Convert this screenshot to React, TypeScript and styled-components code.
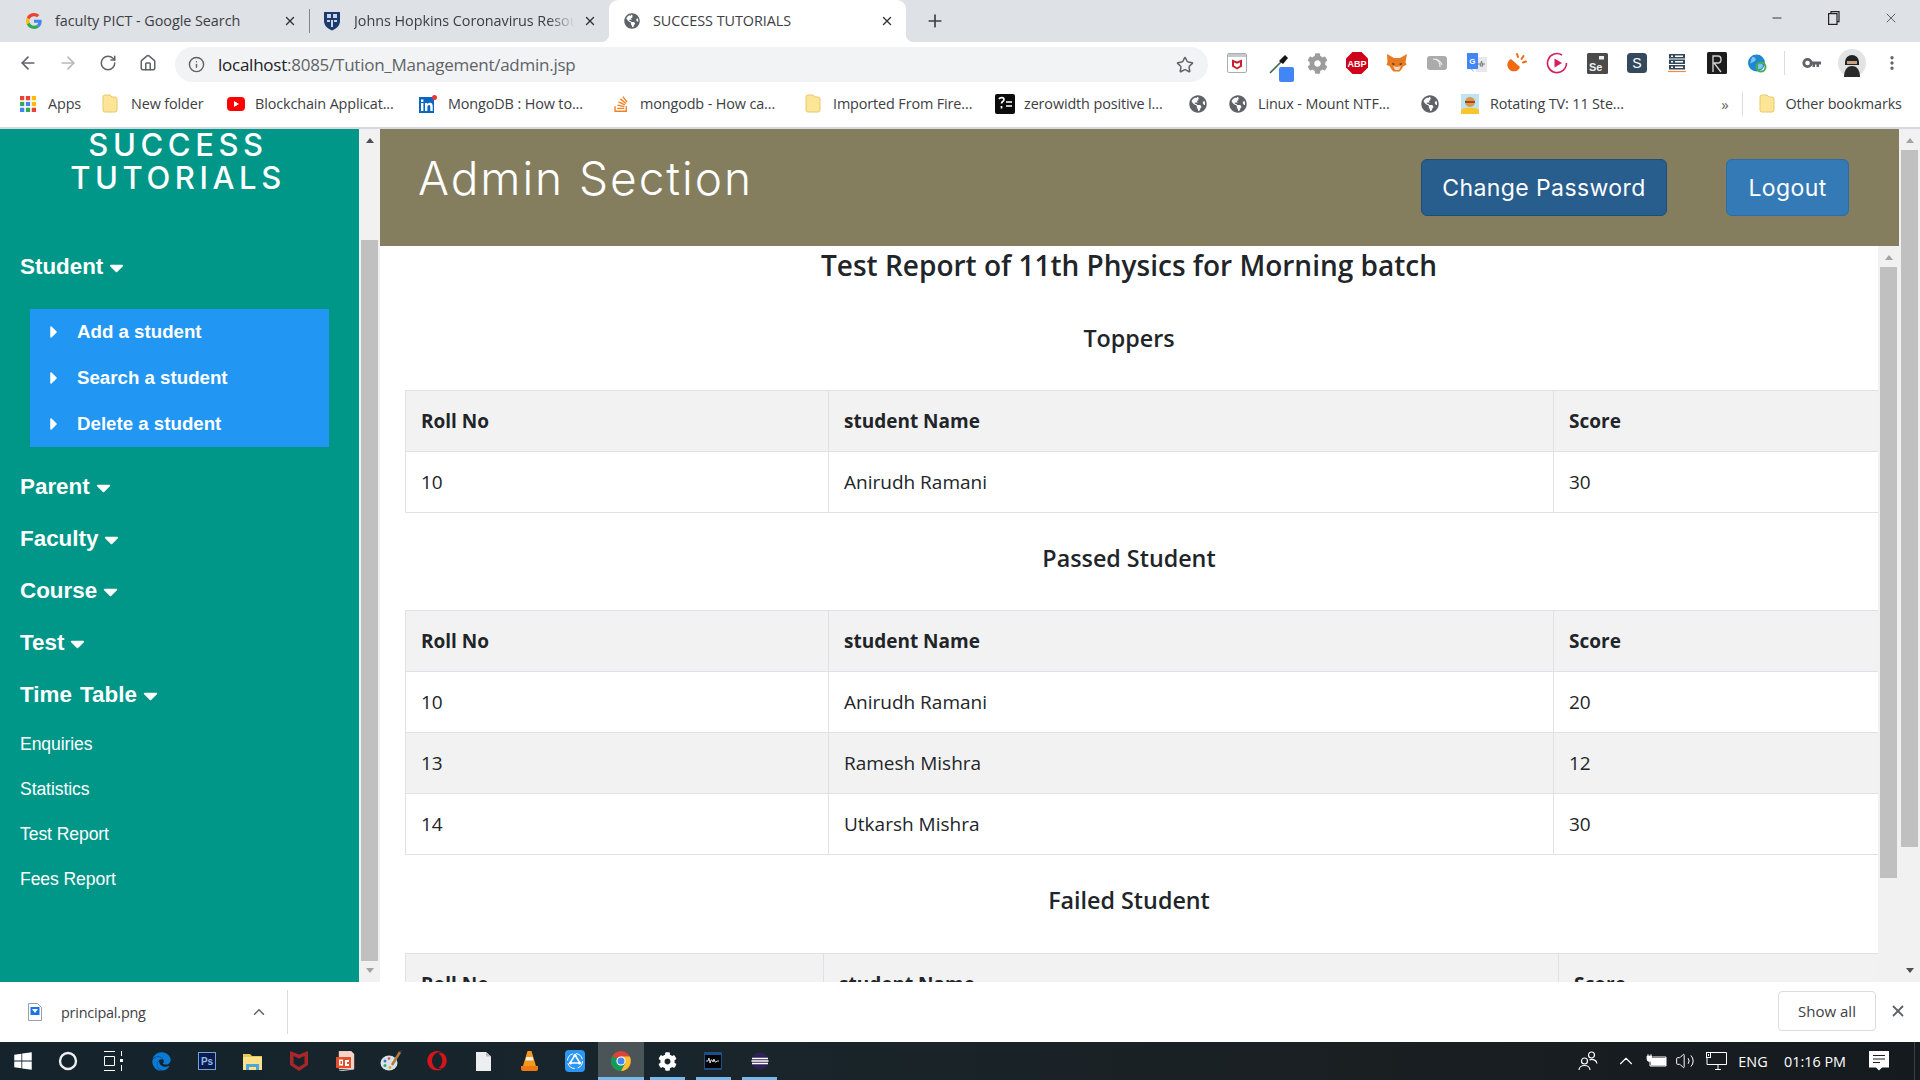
import React from "react";
import styled, { createGlobalStyle } from "styled-components";
import { ArrowLeft, ArrowRight, RotateCw, Home, Info, Star, X, Plus, Minus, ChevronUp, Volume2, MoreVertical } from "lucide-react";
import { FaGlobeAmericas, FaStackOverflow, FaCog, FaWindows, FaEdge, FaOpera, FaCaretDown, FaCaretRight } from "react-icons/fa";

const GlobalStyle = createGlobalStyle`
  html, body { margin: 0; padding: 0; width: 1920px; height: 1080px; overflow: hidden; background: #fff; }
  * { box-sizing: border-box; }
`;

const UI_FONT = `"Open Sans", "Noto Sans", sans-serif`;
const BRAND_FONT = `Inter, "Open Sans", sans-serif`;

const Screen = styled.div`
  width: 1920px; height: 1080px; display: flex; flex-direction: column; overflow: hidden;
  font-family: ${UI_FONT};
`;

/* ---------- tabs ---------- */
const TabStrip = styled.div`
  height: 42px; flex: none; background: #dee1e6; display: flex; align-items: stretch; padding-left: 16px;
`;
const Tab = styled.div<{ $w: number; $pad: number; $active?: boolean; $sep?: boolean }>`
  position: relative; width: ${p => p.$w}px; display: flex; align-items: center; padding-left: ${p => p.$pad}px; gap: 13px;
  background: ${p => (p.$active ? "#fff" : "transparent")};
  border-radius: ${p => (p.$active ? "9px 9px 0 0" : "0")};
  ${p => p.$sep ? `&::before { content: ""; position: absolute; left: 0; top: 9px; bottom: 9px; width: 1px; background: #80868b; }` : ""}
  ${p => p.$active ? `
    &::after { content: ""; position: absolute; right: -8px; bottom: 0; width: 8px; height: 8px;
      background: radial-gradient(circle at 100% 0, transparent 8px, #fff 8.5px); }
    &::before { content: ""; position: absolute; left: -8px; bottom: 0; width: 8px; height: 8px;
      background: radial-gradient(circle at 0 0, transparent 8px, #fff 8.5px); }
  ` : ""}
`;
const TabTitle = styled.span<{ $fade?: boolean }>`
  flex: 1; min-width: 0; margin-top: -2px; white-space: nowrap; overflow: hidden; font-size: 14.4px; letter-spacing: -0.05px; color: #3c4043;
  ${p => p.$fade ? `-webkit-mask-image: linear-gradient(90deg, #000 88%, transparent 100%);` : ""}
`;
const TabClose = styled.span`
  flex: none; width: 14px; height: 14px; margin-right: 12px; margin-left: -5px; display: flex; color: #303336;
`;
const NewTab = styled.span`
  margin-left: 19px; display: flex; align-items: center; color: #3c4043;
`;
const WindowControls = styled.div`
  margin-left: auto; display: flex; align-items: flex-start; padding: 10px 21px 0 0; gap: 41px; color: #202124;
`;
const WinBtn = styled.span`
  width: 16px; height: 16px; display: flex; align-items: center; justify-content: center;
`;

/* ---------- toolbar ---------- */
const Toolbar = styled.div`
  height: 42px; flex: none; background: #fff; display: flex; align-items: center; padding-left: 8px;
`;
const Slot = styled.span<{ $color?: string }>`
  flex: none; width: 40px; height: 36px; display: flex; align-items: center; justify-content: center;
  color: ${p => p.$color || "#5f6368"};
`;
const AddressBar = styled.div`
  flex: none; width: 1033px; height: 35px; margin: 5px 9px 2px 7px; border-radius: 18px; background: #f1f3f4;
  display: flex; align-items: center; padding: 0 14px 0 13px; color: #5f6368;
`;
const Url = styled.span`
  margin-left: 13px; font-size: 17px; letter-spacing: -0.25px; color: #202124; flex: 1; white-space: nowrap;
  & > em { font-style: normal; color: #5f6368; }
`;
const ToolbarSep = styled.span`
  flex: none; width: 1px; height: 24px; margin: 0 7px; background: #dadce0;
`;

/* ---------- bookmarks ---------- */
const Bookmarks = styled.div`
  height: 43px; flex: none; background: #fff; display: flex; align-items: center; padding: 0 0 4px 18px;
`;
const Bookmark = styled.div<{ $w: number; $gap?: number }>`
  flex: none; width: ${p => p.$w}px; display: flex; align-items: center; gap: ${p => p.$gap ?? 10}px;
  font-size: 14.4px; letter-spacing: -0.12px; color: #3c4043; white-space: nowrap;
`;
const IconBox = styled.span`
  flex: none; width: 20px; height: 20px; display: flex; align-items: center; justify-content: center;
`;
const BookmarkSep = styled.span`
  flex: none; width: 1px; height: 24px; background: #dadce0; margin: 0 14px 0 8.5px;
`;
const Overflow = styled.span`
  flex: none; width: 16px; font-size: 15px; color: #5f6368; text-align: center;
`;
const PageEdge = styled.div`
  height: 2px; flex: none; background: #d6d8dd;
`;

/* ---------- page ---------- */
const Main = styled.div`
  height: 853px; flex: none; display: flex; overflow: hidden; background: #fff;
`;
const Sidebar = styled.nav`
  flex: none; width: 359px; background: #009688; color: #fff; font-family: "Liberation Sans", Arial, sans-serif;
`;
const Logo = styled.div`
  font-family: ${BRAND_FONT}; font-weight: 500; font-size: 31px; line-height: 33px; letter-spacing: 4.6px; text-align: center;
  height: 66px; margin: -1px 0 47px; padding-right: 3px;
`;
const MenuHead = styled.div`
  height: 52px; padding-left: 20px; display: flex; align-items: center; gap: 2px; font-weight: 700; font-size: 22.4px; word-spacing: 2px;
`;
const SubMenu = styled.div`
  width: 299px; margin: 16px 0 14px 30px; height: 138px; background: #2196f3;
`;
const SubItem = styled.div`
  height: 46px; display: flex; align-items: center; padding-left: 14px; gap: 13px; font-weight: 700; font-size: 18.7px;
`;
const MenuLink = styled.div`
  height: 45px; padding: 2px 0 0 20px; display: flex; align-items: center; font-size: 17.6px; letter-spacing: -0.1px;
`;
const Track = styled.div`
  flex: none; width: 21px; height: 100%; background: #f1f1f1; display: flex; flex-direction: column; align-items: center;
`;
const Arrow = styled.span<{ $dir: "up" | "down"; $dark?: boolean }>`
  flex: none; height: 21px; display: flex; align-items: center; justify-content: center;
  padding: ${p => (p.$dir === "up" ? "2px 0 0" : "0 0 3px")};
  margin-top: ${p => (p.$dir === "down" ? "auto" : "0")};
  &::after { content: ""; width: 0; height: 0; border-left: 4.5px solid transparent; border-right: 4.5px solid transparent;
    ${p => p.$dir === "up" ? "border-bottom" : "border-top"}: 5px solid ${p => (p.$dark ? "#505050" : "#a3a3a3")}; }
`;
const Thumb = styled.span<{ $top: number; $h: number }>`
  flex: none; width: 17px; height: ${p => p.$h}px; margin-top: ${p => p.$top}px; background: #c0c0c0;
`;
const Workspace = styled.div`
  flex: none; width: 1519px; display: flex; flex-direction: column;
`;
const Header = styled.header`
  height: 117px; flex: none; background: #847e5f; display: flex; align-items: center; padding: 0 50px 0 38px; gap: 59px;
`;
const PageTitle = styled.h1`
  margin: 0 auto 20px 0; font-family: ${BRAND_FONT}; font-weight: 300; font-size: 46px; letter-spacing: 1.95px; color: #fff;
`;
const HeadButton = styled.button<{ $w: number; $dark?: boolean }>`
  width: ${p => p.$w}px; height: 57px; border-radius: 6px; font-family: ${BRAND_FONT}; font-size: 23px; letter-spacing: 0.4px; font-weight: 400; color: #fff; padding: 0;
  background: ${p => (p.$dark ? "#285e8e" : "#337ab7")};
  border: 1px solid ${p => (p.$dark ? "#204d74" : "#2e6da4")};
`;
const ContentRow = styled.div`
  flex: 1; min-height: 0; display: flex;
`;
const Report = styled.main`
  flex: none; width: 1498px; height: 736px; overflow: hidden; background: #fff; color: #212529;
`;
const ReportTitle = styled.h2`
  margin: 0; padding-bottom: 9px; font-size: 28px; line-height: 38px; font-weight: 600; text-align: center;
`;
const SectionTitle = styled.h3<{ $after?: number }>`
  margin: 29px 0 ${p => p.$after ?? 36}px; font-size: 23.3px; line-height: 32px; font-weight: 600; text-align: center;
`;
const Table = styled.table`
  margin-left: 25px; width: 1473px; border-collapse: collapse; table-layout: fixed; font-size: 19px;
  & tr:nth-child(odd) { background: #f2f2f2; }
`;
const HeadCell = styled.th`
  height: 61px; padding: 0 15px; border: 1px solid #dee2e6; text-align: left; font-weight: 700;
`;
const Cell = styled.td`
  height: 61px; padding: 0 15px; border: 1px solid #dee2e6;
`;

/* ---------- download bar ---------- */
const DownloadBar = styled.div`
  height: 60px; flex: none; background: #fff; display: flex; align-items: center; padding-left: 28px;
`;
const FileName = styled.span`
  margin-left: 19px; width: 186px; font-size: 14.4px; letter-spacing: -0.2px; color: #3c4043;
`;
const DlChevron = styled.span`
  width: 24px; display: flex; justify-content: center; color: #5f6368;
`;
const DlSep = styled.span`
  width: 1px; height: 44px; background: #dadce0; margin-left: 16px;
`;
const ShowAll = styled.button`
  margin: 0 0 2px auto; width: 98px; height: 40px; border: 1px solid #dadce0; border-radius: 4px; background: #fff;
  font-family: ${UI_FONT}; font-size: 15px; color: #3c4043; padding: 0 0 1px;
`;
const DlClose = styled.span`
  width: 44px; margin-bottom: 2px; display: flex; justify-content: center; color: #5f6368;
`;

/* ---------- taskbar ---------- */
const Taskbar = styled.div`
  height: 38px; flex: none; background: linear-gradient(90deg, #14232c 0%, #19252b 40%, #1a1f22 70%, #141a1e 100%);
  display: flex; align-items: stretch; color: #fff;
`;
const TaskSlot = styled.span<{ $w?: number; $after?: number; $active?: boolean; $open?: boolean }>`
  flex: none; width: ${p => p.$w ?? 46}px; margin-right: ${p => p.$after ?? 0}px; display: flex; align-items: center; justify-content: center; position: relative;
  background: ${p => (p.$active ? "#4b5456" : "transparent")};
  ${p => p.$open ? `&::after { content: ""; position: absolute; left: ${p.$active ? 0 : 6}px; right: ${p.$active ? 0 : 5}px; bottom: 0; height: 3px; background: #76b9ed; }` : ""}
`;
const Tray = styled.div`
  margin: 0 5px 0 auto; display: flex; align-items: center; border-right: 1px solid #3a4145;
`;
const TrayIcon = styled.span<{ $w: number }>`
  flex: none; width: ${p => p.$w}px; display: flex; align-items: center; justify-content: center; color: #fff;
`;
const TrayText = styled.span<{ $w: number }>`
  flex: none; width: ${p => p.$w}px; font-size: 14.4px; color: #fff; white-space: nowrap; text-align: center;
`;

/* ---------- drawings ---------- */
const Globe = ({ size = 16 }: { size?: number }) => <FaGlobeAmericas size={size} color="#5f6368" />;

const GoogleG = () => (
  <svg width="16" height="16" viewBox="0 0 48 48">
    <path fill="#EA4335" d="M24 9.5c3.54 0 6.71 1.22 9.21 3.6l6.85-6.85C35.9 2.38 30.47 0 24 0 14.62 0 6.51 5.38 2.56 13.22l7.98 6.19C12.43 13.72 17.74 9.5 24 9.5z" />
    <path fill="#4285F4" d="M46.98 24.55c0-1.57-.15-3.09-.38-4.55H24v9.02h12.94c-.58 2.96-2.26 5.48-4.78 7.18l7.73 6c4.51-4.18 7.09-10.36 7.09-17.65z" />
    <path fill="#FBBC05" d="M10.53 28.59c-.48-1.45-.76-2.99-.76-4.59s.27-3.14.76-4.59l-7.98-6.19C.92 16.46 0 20.12 0 24c0 3.88.92 7.54 2.56 10.78l7.97-6.19z" />
    <path fill="#34A853" d="M24 48c6.48 0 11.93-2.13 16.08-5.81l-7.73-6c-2.15 1.45-4.92 2.3-8.35 2.3-6.26 0-11.57-4.22-13.47-9.91l-7.98 6.19C6.51 42.62 14.62 48 24 48z" />
  </svg>
);
const JhuShield = () => (
  <svg width="18" height="20" viewBox="0 0 18 20">
    <path fill="#1d3a6e" d="M1 1h16v9c0 5-4 7.5-8 9.5-4-2-8-4.5-8-9.5z" />
    <path fill="#c9d4e6" d="M4 3h4v4H4zM10 3h4v4h-4zM8 9h2v7H8zM4 9h3v2H4zM11 9h3v2h-3z" />
  </svg>
);
const AppsGrid = () => {
  const c = ["#ea4335", "#ea4335", "#fbbc04", "#34a853", "#4285f4", "#fbbc04", "#4285f4", "#34a853", "#ea4335"];
  return (
    <svg width="16" height="16" viewBox="0 0 15 15">
      {c.map((f, i) => <rect key={i} x={(i % 3) * 5.5} y={Math.floor(i / 3) * 5.5} width="4" height="4" fill={f} />)}
    </svg>
  );
};
const Folder = () => (
  <svg width="16" height="19" viewBox="0 0 16 19">
    <path d="M1 3a2 2 0 0 1 2-2h5l2 2h3a2 2 0 0 1 2 2v11a2 2 0 0 1-2 2H3a2 2 0 0 1-2-2z" fill="#fce597" stroke="#e9c866" />
  </svg>
);
const YouTube = () => (
  <svg width="18" height="16" viewBox="0 0 18 16">
    <rect y="1" width="18" height="14" rx="4" fill="#f00" />
    <path d="M7 5l5 3-5 3z" fill="#fff" />
  </svg>
);
const LinkedInBadge = () => (
  <svg width="20" height="20" viewBox="0 0 20 20">
    <rect x="1" y="3" width="15" height="16" fill="#0a66c2" />
    <path fill="#fff" d="M3 9h2.4v8H3zM3 5.500h2.4V8H3zM7 9h2.3v1.200C10 9.300 11 8.800 12 8.800c2 0 2.700 1.300 2.700 3.400V17h-2.400v-4.300c0-1.100-.3-1.800-1.200-1.800-1 0-1.700.7-1.700 2V17H7z" />
    <circle cx="16.5" cy="3.500" r="2.500" fill="#e53935" />
  </svg>
);
const Terminal = () => (
  <svg width="20" height="20" viewBox="0 0 20 20">
    <rect width="20" height="20" rx="2" y="0" fill="#0b0b0b" />
    <path d="M4 5c1-2 5-2 5 .5 0 2-2.500 2-2.500 4M6.500 12v2.500M11 8h6M11 12h6" stroke="#fff" strokeWidth="1.700" fill="none" />
  </svg>
);
const RotatingTv = () => (
  <svg width="20" height="22" viewBox="0 0 20 22">
    <rect x="1" y="1" width="18" height="20" fill="#bfe3f0" />
    <circle cx="10" cy="9" r="5" fill="#d79a4c" />
    <path d="M5 9h10" stroke="#a5471f" strokeWidth="2" />
    <path d="M1 21v-4c3-3 15-3 18 0v4z" fill="#f7c52c" />
  </svg>
);
const McAfeeBox = () => (
  <svg width="20" height="20" viewBox="0 0 20 20">
    <rect x=".5" y=".5" width="19" height="19" rx="1.500" fill="#fff" stroke="#a9adb1" />
    <rect x="1" y="1" width="18" height="3" fill="#c5c9cc" />
    <path d="M5 6.500l5 2 5-2v7l-5 3-5-3zM7 9.500v3l3 2 3-2v-3l-3 1.200z" fill="#c8202f" fillRule="evenodd" />
  </svg>
);
const Dropper = () => (
  <svg width="38" height="40" viewBox="-10 -10 38 40">
    <path d="M2 20 L14 8" stroke="#3d6b50" strokeWidth="1.600" />
    <path d="M11 8 L17 2 L20 5 L15 11z" fill="#151515" />
    <rect x="11" y="14" width="15" height="15" rx="2" fill="#4285f4" />
  </svg>
);
const AbpSign = () => (
  <svg width="22" height="22" viewBox="0 0 22 22">
    <path d="M6.500 0h9L22 6.500v9L15.500 22h-9L0 15.500v-9z" fill="#d0021b" />
    <text x="11" y="14.500" textAnchor="middle" fontSize="9" fontWeight="700" fill="#fff" fontFamily="Liberation Sans">ABP</text>
  </svg>
);
const Fox = () => (
  <svg width="22" height="20" viewBox="0 0 22 20">
    <path d="M1 1l7 4h6l7-4-1.500 8 1 3-3 1-2.500 4-1.500 1.500H7.500L6 17l-2.500-4-3-1 1-3z" fill="#e87a23" />
    <path d="M7 13l4 1 4-1-2 4h-4z" fill="#f3d9c0" />
    <path d="M6 10l3 1-2 1zM16 10l-3 1 2 1z" fill="#33261a" />
  </svg>
);
const GraySwirl = () => (
  <svg width="20" height="14" viewBox="0 0 20 14">
    <rect width="20" height="14" rx="3" fill="#ababab" />
    <path d="M6 3c4 0 7 3 7 8M9 3c2 1 5 3 6 6" stroke="#eee" strokeWidth="1.200" fill="none" />
  </svg>
);
const Translate = () => (
  <svg width="22" height="22" viewBox="0 0 22 22">
    <rect x="10" y="5" width="11" height="15" fill="#e7e8ea" />
    <path d="M15.500 9l1.500 5-3 0zM12 12h7" stroke="#7b8085" strokeWidth="1" fill="none" />
    <path d="M1 1h11v16H6l2 3-3-3H1z" fill="#4285f4" />
    <text x="6.300" y="11.500" textAnchor="middle" fontSize="8" fontWeight="700" fill="#fff" fontFamily="Liberation Sans">G</text>
  </svg>
);
const OrangeBowl = () => (
  <svg width="22" height="22" viewBox="0 0 22 22">
    <path d="M5 7 L14 15 A6.500 6.500 0 1 1 5 7z" fill="#f26a0f" />
    <path d="M12 5l-1-3M15.500 7l2-3M17 10.500l3-1" stroke="#f26a0f" strokeWidth="2" strokeLinecap="round" />
  </svg>
);
const PlayRing = () => (
  <svg width="22" height="22" viewBox="0 0 22 22">
    <path d="M16 3A9.500 9.500 0 1 0 20.500 11" fill="none" stroke="#d81e5b" strokeWidth="1.600" />
    <path d="M8.500 6.500L16 11l-7.500 4.500z" fill="#d81e5b" />
  </svg>
);
const Selenium = () => (
  <svg width="21" height="21" viewBox="0 0 21 21">
    <rect width="21" height="21" rx="1.500" fill="#4a4a4a" />
    <rect x="12" y="3" width="5" height="3.500" fill="#eee" />
    <text x="2" y="18" fontSize="11" fontWeight="700" fill="#eee" fontFamily="Liberation Sans">Se</text>
  </svg>
);
const SBadge = () => (
  <svg width="20" height="20" viewBox="0 0 20 20">
    <rect width="20" height="20" rx="3.500" fill="#34495e" />
    <text x="10" y="15" textAnchor="middle" fontSize="14" fontWeight="400" fill="#fff" fontFamily="Liberation Sans">S</text>
  </svg>
);
const ServerStack = () => (
  <svg width="20" height="20" viewBox="0 0 20 20">
    {[1, 6.5, 12].map(y => <g key={y}><rect x="2" y={y} width="16" height="4.500" fill="#33475b" /><rect x="4" y={y + 1.5} width="2" height="1.500" fill="#fff" /><rect x="8" y={y + 1.5} width="8" height="1.500" fill="#fff" /></g>)}
    <path d="M1 18.500h18" stroke="#f28c38" strokeWidth="1.200" />
  </svg>
);
const RBadge = () => (
  <svg width="20" height="22" viewBox="0 0 20 22">
    <rect width="20" height="22" rx="1.500" fill="#1c1c1c" />
    <path d="M6 20V4h5c4 0 4 7 0 7H7l7 9" stroke="#cfcfcf" strokeWidth="1.400" fill="none" />
  </svg>
);
const BlueWorld = () => (
  <svg width="20" height="20" viewBox="0 0 20 20">
    <circle cx="9.500" cy="10" r="8.500" fill="#1e88d2" />
    <path d="M5 4c3 0 5 2 3 4s-4 1-5 3M11 11c3-1 5 0 5 2s-3 4-5 3z" fill="#7cc4ee" />
    <circle cx="14" cy="14" r="4.500" fill="none" stroke="#4caf50" strokeWidth="2" />
  </svg>
);
const KeyIcon = () => (
  <svg width="20" height="14" viewBox="0 0 20 14">
    <circle cx="5.500" cy="7" r="3.700" fill="none" stroke="#5f6368" strokeWidth="2.800" />
    <path d="M9 5.500h10v3h-2v2.500h-2.500V8.500H13V11h-2.500V8.500H9z" fill="#5f6368" />
  </svg>
);
const Avatar = () => (
  <svg width="28" height="28" viewBox="0 0 28 28">
    <circle cx="14" cy="14" r="14" fill="#e1e3e5" />
    <path d="M7 13a7 7 0 0 1 14 0v3H7z" fill="#222" />
    <rect x="9" y="12" width="10" height="3" fill="#c9a283" />
    <path d="M6 28c0-8 4-11 8-11s8 3 8 11z" fill="#2b2b2b" />
  </svg>
);
const DownloadFile = () => (
  <svg width="14" height="18" viewBox="0 0 14 18">
    <path d="M.500.500h9l4 4v13H.500z" fill="#fff" stroke="#9aa0a6" />
    <rect x="2.500" y="4" width="9" height="8" fill="#1a73e8" />
    <path d="M4 6h6L7 10z" fill="#fff" />
  </svg>
);
const TaskView = () => (
  <svg width="20" height="20" viewBox="0 0 20 20" fill="none" stroke="#fff" strokeWidth="1">
    <path d="M1 .5h11M1 19.500h11M1.500 5.500h10v9h-10zM18.500 0v5M18.500 14v6" />
    <rect x="17" y="8" width="3" height="3" fill="#fff" stroke="none" />
  </svg>
);
const ExplorerFolder = () => (
  <svg width="20" height="18" viewBox="0 0 20 18">
    <path d="M0 2h7l2 2h10v3H0z" fill="#e8c75a" />
    <path d="M0 5h19v13H0z" fill="#fbe28a" />
    <path d="M3 18v-6h13v6h-3v-3H6v3z" fill="#4ea6dc" />
  </svg>
);
const McAfeeShield = () => (
  <svg width="18" height="20" viewBox="0 0 18 20">
    <path fillRule="evenodd" fill="#a9262b" d="M0 0l9 3.500L18 0v14l-9 6-9-6zM3.500 5v7.500L9 16l5.500-3.500V5L9 7.500z" />
  </svg>
);
const PptDoc = () => (
  <svg width="20" height="20" viewBox="0 0 20 20">
    <path d="M4 0h12l3 3v15H4z" fill="#f6d5c8" stroke="#e8b09c" strokeWidth=".5" />
    <path d="M1 6h15v11H1z" fill="#e2512c" />
    <path d="M4 8.500h4v6H4zM5.500 10v3h1.500v-3zM10 9h4v2h-2v2h2v2h-4z" fill="#fff" fillRule="evenodd" />
    <path d="M4 20l15-2" stroke="#ccc" strokeWidth="1" />
  </svg>
);
const Palette = () => (
  <svg width="22" height="22" viewBox="0 0 22 22">
    <ellipse cx="9" cy="13" rx="8.500" ry="7.500" fill="#d7e2ea" />
    <circle cx="5" cy="11" r="1.500" fill="#3c78c8" /><circle cx="9" cy="8.500" r="1.300" fill="#e04b3a" />
    <circle cx="5" cy="15.500" r="1.500" fill="#3aa655" /><circle cx="10" cy="17.500" r="1.400" fill="#e0a72e" />
    <path d="M12 15L20 2" stroke="#b47a3c" strokeWidth="2.500" />
    <path d="M19 1l3-1-1 3z" fill="#3a3a3a" />
  </svg>
);
const BlankFile = () => (
  <svg width="15" height="19" viewBox="0 0 15 19">
    <path d="M0 0h10l5 4.500V19H0z" fill="#eceeef" />
    <path d="M10 0l5 4.500h-5z" fill="#b6babd" />
  </svg>
);
const VlcCone = () => (
  <svg width="17" height="20" viewBox="0 0 17 20">
    <path d="M6.500 0h4L15 15H2z" fill="#f39a1e" />
    <path d="M5.400 6h6.200l1 3.500H4.400z" fill="#f2efe9" />
    <path d="M0 15h17v3a2 2 0 0 1-2 2H2a2 2 0 0 1-2-2z" fill="#ec7a12" />
  </svg>
);
const ShareIt = () => (
  <svg width="20" height="22" viewBox="0 0 20 22">
    <rect width="20" height="22" rx="4" fill="#2b96f3" />
    <circle cx="10" cy="11" r="7.500" fill="none" stroke="#fff" strokeWidth="1" strokeDasharray="9 3" />
    <path d="M10 5l5 8H5z" fill="none" stroke="#fff" strokeWidth="1.500" />
    <circle cx="10" cy="5.500" r="1.500" fill="#fff" /><circle cx="5.500" cy="13" r="1.500" fill="#fff" /><circle cx="14.500" cy="13" r="1.500" fill="#fff" />
  </svg>
);
const ChromeLogo = () => (
  <svg width="20" height="20" viewBox="0 0 20 20">
    <circle cx="10" cy="10" r="10" fill="#dc4437" />
    <path d="M10 10L1.340 5A10 10 0 0 0 10 20l5-8.660z" fill="#0f9d58" />
    <path d="M10 5.500h8.700A10 10 0 0 1 10 20l4.300-7.700z" fill="#fbc02d" />
    <circle cx="10" cy="10" r="4.600" fill="#fff" />
    <circle cx="10" cy="10" r="3.500" fill="#4285f4" />
  </svg>
);
const MySqlBox = () => (
  <svg width="18" height="18" viewBox="0 0 18 18">
    <rect width="18" height="18" rx="1" fill="#1f4f8a" />
    <rect x="1" y="3" width="16" height="13" fill="#050505" />
    <path d="M2 9h2l1-3 1 5 1-3h1l1 2 1-3 1 3h1l1-1h2" stroke="#e8e8e8" strokeWidth=".9" fill="none" />
  </svg>
);
const Eclipse = () => (
  <svg width="20" height="20" viewBox="0 0 20 20">
    <path d="M8 0a10 10 0 0 0 0 20a10 10 0 0 1 0-20z" fill="#d98a2b" />
    <circle cx="11" cy="10" r="8.500" fill="#2c2255" />
    <path d="M3 7.500h16M2.500 10h17M3 12.500h16" stroke="#fff" strokeWidth="1.300" />
  </svg>
);
const People = () => (
  <svg width="20" height="20" viewBox="0 0 20 20" fill="none" stroke="#fff" strokeWidth="1.200">
    <circle cx="6.500" cy="10" r="3" /><path d="M1 19c0-6 11-6 11 0" />
    <circle cx="13.500" cy="4" r="3" /><path d="M11.500 9c3-1.500 7 0 7.500 3.500" />
  </svg>
);
const Battery = () => (
  <svg width="22" height="14" viewBox="0 0 22 14">
    <path d="M3 0v2M6 0v2M2 2h5v3a2 2 0 0 1-5 0z" fill="#fff" stroke="#fff" strokeWidth=".8" />
    <path d="M5 7v5h16V3H8" fill="none" stroke="#fff" />
    <rect x="6" y="4" width="15" height="7.500" fill="#fff" />
  </svg>
);
const Monitor = () => (
  <svg width="21" height="18" viewBox="0 0 21 18" fill="none" stroke="#fff" strokeWidth="1">
    <path d="M5 .5h15.500v12H1V5M9 17.500h6M12 12.500v5" />
    <rect x=".5" y=".5" width="4" height="5" />
    <rect x="2" y="2" width="1" height="2" fill="#fff" stroke="none" />
  </svg>
);
const Notify = () => (
  <svg width="20" height="20" viewBox="0 0 20 20">
    <path d="M0 0h20v16.500h-7l-3 3-3-3H0z" fill="#fff" />
    <path d="M4 4.500h12M4 8h12M4 11.500h7" stroke="#1a2025" strokeWidth="1" />
  </svg>
);

const Caret = () => <FaCaretDown size={23} />;
const SubCaret = () => <FaCaretRight size={20} />;

const topMenus = ["Parent", "Faculty", "Course", "Test", "Time Table"];
const links = ["Enquiries", "Statistics", "Test Report", "Fees Report"];
const subs = ["Add a student", "Search a student", "Delete a student"];

type Row = [string, string, string];
const toppers: Row[] = [["10", "Anirudh Ramani", "30"]];
const passed: Row[] = [["10", "Anirudh Ramani", "20"], ["13", "Ramesh Mishra", "12"], ["14", "Utkarsh Mishra", "30"]];

const ScoreTable = ({ cols, rows }: { cols: number[]; rows: Row[] }) => (
  <Table>
    <colgroup>{cols.map((c, i) => <col key={i} width={c} />)}</colgroup>
    <tbody>
      <tr><HeadCell>Roll No</HeadCell><HeadCell>student Name</HeadCell><HeadCell>Score</HeadCell></tr>
      {rows.map(r => <tr key={r[0]}><Cell>{r[0]}</Cell><Cell>{r[1]}</Cell><Cell>{r[2]}</Cell></tr>)}
    </tbody>
  </Table>
);

export default function App() {
  return (
    <Screen>
      <GlobalStyle />
      <TabStrip>
        <Tab $w={293} $pad={10}><GoogleG /><TabTitle>faculty PICT - Google Search</TabTitle><TabClose><X size={14} strokeWidth={2.4} /></TabClose></Tab>
        <Tab $w={300} $pad={14} $sep><JhuShield /><TabTitle $fade>Johns Hopkins Coronavirus Resource Center</TabTitle><TabClose><X size={14} strokeWidth={2.4} /></TabClose></Tab>
        <Tab $w={297} $pad={15} $active><Globe /><TabTitle>SUCCESS TUTORIALS</TabTitle><TabClose><X size={14} strokeWidth={2.4} /></TabClose></Tab>
        <NewTab><Plus size={20} strokeWidth={2} /></NewTab>
        <WindowControls>
          <WinBtn><Minus size={14} strokeWidth={1.5} /></WinBtn>
          <WinBtn>
            <svg width="12" height="14" viewBox="0 0 12 14" fill="none" stroke="#202124" strokeWidth="1.200"><path d="M3 2.500V.6h8v10H9" /><rect x=".6" y="2.600" width="8.400" height="10.800" /></svg>
          </WinBtn>
          <WinBtn><X size={18} strokeWidth={1} /></WinBtn>
        </WindowControls>
      </TabStrip>

      <Toolbar>
        <Slot><ArrowLeft size={20} strokeWidth={2} /></Slot>
        <Slot $color="#b5b8bb"><ArrowRight size={20} strokeWidth={2} /></Slot>
        <Slot><RotateCw size={18} strokeWidth={2} /></Slot>
        <Slot><Home size={18} strokeWidth={2} /></Slot>
        <AddressBar>
          <Info size={17} strokeWidth={2} />
          <Url>localhost<em>:8085/Tution_Management/admin.jsp</em></Url>
          <Star size={18} strokeWidth={2} />
        </AddressBar>
        <Slot><McAfeeBox /></Slot>
        <Slot><Dropper /></Slot>
        <Slot><FaCog size={21} color="#9c9c9c" /></Slot>
        <Slot><AbpSign /></Slot>
        <Slot><Fox /></Slot>
        <Slot><GraySwirl /></Slot>
        <Slot><Translate /></Slot>
        <Slot><OrangeBowl /></Slot>
        <Slot><PlayRing /></Slot>
        <Slot><Selenium /></Slot>
        <Slot><SBadge /></Slot>
        <Slot><ServerStack /></Slot>
        <Slot><RBadge /></Slot>
        <Slot><BlueWorld /></Slot>
        <ToolbarSep />
        <Slot><KeyIcon /></Slot>
        <Slot><Avatar /></Slot>
        <Slot><MoreVertical size={18} strokeWidth={2.4} /></Slot>
      </Toolbar>

      <Bookmarks>
        <Bookmark $w={82}><IconBox><AppsGrid /></IconBox>Apps</Bookmark>
        <Bookmark $w={126} $gap={11}><IconBox><Folder /></IconBox>New folder</Bookmark>
        <Bookmark $w={192} $gap={9}><IconBox><YouTube /></IconBox>Blockchain Applicat...</Bookmark>
        <Bookmark $w={193} $gap={10}><IconBox><LinkedInBadge /></IconBox>MongoDB : How to...</Bookmark>
        <Bookmark $w={192} $gap={9}><IconBox><FaStackOverflow size={18} color="#f48024" /></IconBox>mongodb - How ca...</Bookmark>
        <Bookmark $w={192} $gap={10}><IconBox><Folder /></IconBox>Imported From Fire...</Bookmark>
        <Bookmark $w={193} $gap={9}><IconBox><Terminal /></IconBox>zerowidth positive l...</Bookmark>
        <Bookmark $w={40}><IconBox><Globe size={18} /></IconBox></Bookmark>
        <Bookmark $w={192} $gap={10}><IconBox><Globe size={18} /></IconBox>Linux - Mount NTF...</Bookmark>
        <Bookmark $w={40}><IconBox><Globe size={18} /></IconBox></Bookmark>
        <Bookmark $w={257} $gap={10}><IconBox><RotatingTv /></IconBox>Rotating TV: 11 Ste...</Bookmark>
        <Overflow>»</Overflow>
        <BookmarkSep />
        <Bookmark $w={140} $gap={9}><IconBox><Folder /></IconBox>Other bookmarks</Bookmark>
      </Bookmarks>
      <PageEdge />

      <Main>
        <Sidebar>
          <Logo>SUCCESS<br />TUTORIALS</Logo>
          <MenuHead>Student <Caret /></MenuHead>
          <SubMenu>
            {subs.map(s => <SubItem key={s}><SubCaret />{s}</SubItem>)}
          </SubMenu>
          {topMenus.map(m => <MenuHead key={m}>{m} <Caret /></MenuHead>)}
          {links.map(l => <MenuLink key={l}>{l}</MenuLink>)}
        </Sidebar>
        <Track>
          <Arrow $dir="up" $dark />
          <Thumb $top={90} $h={721} />
          <Arrow $dir="down" />
        </Track>
        <Workspace>
          <Header>
            <PageTitle>Admin Section</PageTitle>
            <HeadButton $w={246} $dark>Change Password</HeadButton>
            <HeadButton $w={123}>Logout</HeadButton>
          </Header>
          <ContentRow>
            <Report>
              <ReportTitle>Test Report of 11th Physics for Morning batch</ReportTitle>
              <SectionTitle>Toppers</SectionTitle>
              <ScoreTable cols={[423, 725, 325]} rows={toppers} />
              <SectionTitle>Passed Student</SectionTitle>
              <ScoreTable cols={[423, 725, 325]} rows={passed} />
              <SectionTitle $after={37}>Failed Student</SectionTitle>
              <ScoreTable cols={[418, 735, 320]} rows={[]} />
            </Report>
            <Track>
              <Arrow $dir="up" />
              <Thumb $top={0} $h={611} />
            </Track>
          </ContentRow>
        </Workspace>
        <Track>
          <Arrow $dir="up" />
          <Thumb $top={0} $h={697} />
          <Arrow $dir="down" $dark />
        </Track>
      </Main>

      <DownloadBar>
        <DownloadFile />
        <FileName>principal.png</FileName>
        <DlChevron><ChevronUp size={18} strokeWidth={2} /></DlChevron>
        <DlSep />
        <ShowAll>Show all</ShowAll>
        <DlClose><X size={18} strokeWidth={2.4} /></DlClose>
      </DownloadBar>

      <Taskbar>
        <TaskSlot $w={45}><FaWindows size={20} /></TaskSlot>
        <TaskSlot $w={45}>
          <svg width="20" height="20" viewBox="0 0 20 20"><circle cx="10" cy="10" r="8" fill="none" stroke="#eee" strokeWidth="2.400" /></svg>
        </TaskSlot>
        <TaskSlot $w={45} $after={3}><TaskView /></TaskSlot>
        <TaskSlot><FaEdge size={19} color="#0a7ad6" /></TaskSlot>
        <TaskSlot>
          <svg width="18" height="18" viewBox="0 0 18 18"><rect x=".5" y=".5" width="17" height="17" fill="#0d1a4a" stroke="#6ea3dc" /><text x="9" y="13" textAnchor="middle" fontSize="10" fontWeight="700" fill="#8fbdf0" fontFamily="Liberation Sans">Ps</text></svg>
        </TaskSlot>
        <TaskSlot><ExplorerFolder /></TaskSlot>
        <TaskSlot><McAfeeShield /></TaskSlot>
        <TaskSlot><PptDoc /></TaskSlot>
        <TaskSlot><Palette /></TaskSlot>
        <TaskSlot><FaOpera size={20} color="#d5141c" /></TaskSlot>
        <TaskSlot><BlankFile /></TaskSlot>
        <TaskSlot><VlcCone /></TaskSlot>
        <TaskSlot><ShareIt /></TaskSlot>
        <TaskSlot $active $open><ChromeLogo /></TaskSlot>
        <TaskSlot $open><FaCog size={19} /></TaskSlot>
        <TaskSlot $open><MySqlBox /></TaskSlot>
        <TaskSlot $open><Eclipse /></TaskSlot>
        <Tray>
          <TrayIcon $w={50}><People /></TrayIcon>
          <TrayIcon $w={26}><ChevronUp size={22} strokeWidth={1.2} /></TrayIcon>
          <TrayIcon $w={34}><Battery /></TrayIcon>
          <TrayIcon $w={24}><Volume2 size={20} strokeWidth={1.2} /></TrayIcon>
          <TrayIcon $w={38}><Monitor /></TrayIcon>
          <TrayText $w={36}>ENG</TrayText>
          <TrayText $w={88}>01:16 PM</TrayText>
          <TrayIcon $w={40}><Notify /></TrayIcon>
          <TrayIcon $w={15} />
        </Tray>
      </Taskbar>
    </Screen>
  );
}
